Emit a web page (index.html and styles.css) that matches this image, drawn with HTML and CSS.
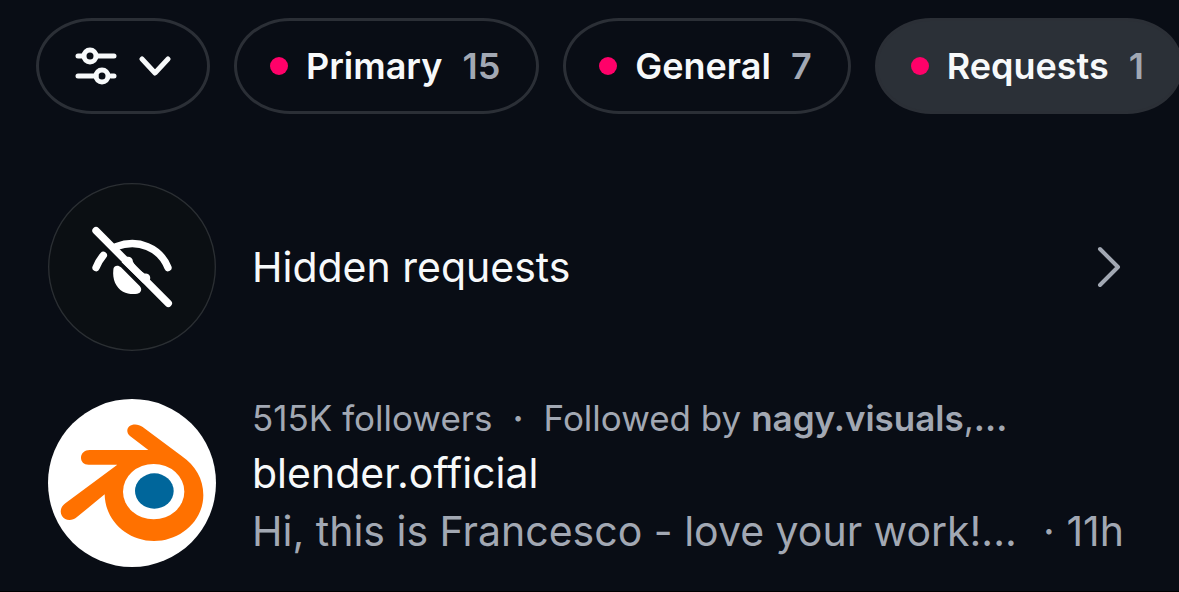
FILE: index.html
```html
<!DOCTYPE html>
<html lang="en">
<head>
    <meta charset="UTF-8">
    <meta name="viewport" content="width=device-width, initial-scale=1.0">
    <title>Requests</title>
    <link rel="stylesheet" href="styles.css">
</head>
<body>
    <nav class="filters">
        <button class="pill pill-filter" aria-label="Filter">
            <svg class="icon-sliders" viewBox="0 0 42 38" aria-hidden="true">
                <path d="M3 9h4M22 9h17M3 29h18M36 29h3"/>
                <circle cx="15" cy="9" r="6"/>
                <circle cx="27" cy="29" r="6"/>
            </svg>
            <svg class="icon-down" viewBox="0 0 32 20" aria-hidden="true">
                <path d="M3 3l13 14L29 3"/>
            </svg>
        </button>
        <button class="pill"><span class="dot"></span>Primary<span class="count">15</span></button>
        <button class="pill"><span class="dot"></span>General<span class="count">7</span></button>
        <button class="pill active"><span class="dot"></span>Requests<span class="count">1</span></button>
    </nav>

    <main class="list">
        <a class="row" href="#hidden">
            <svg class="avatar" viewBox="24 24 504 504" aria-hidden="true">
                <circle class="ring" cx="276" cy="276" r="250"/>
                <path class="pupil" d="M220 284C220 272 234 268 243 277L299 333C308 343 303 354 292 356C278 358 262 357 249 350C227 337 217 312 220 284Z"/>
                <path class="pupil" d="M252 250C264 241 278 246 279 260L290 280L315 296C328 294 335 306 328 320L310 325L245 262Z"/>
                <path class="stroke" d="M168 278Q177 256 190 241M228 215C295 190 360 218 384 278"/>
                <path class="stroke" d="M168 167L385 385"/>
            </svg>
            <span class="title">Hidden requests</span>
            <svg class="icon-next" viewBox="0 0 28 44" aria-hidden="true">
                <path d="M4 4l18 18L4 40"/>
            </svg>
        </a>
        <a class="row" href="#blender">
            <svg class="avatar" viewBox="24 27 504 504" role="img" aria-label="blender.official">
                <circle cx="276" cy="279" r="252" fill="#fff"/>
                <path fill="#ff7100" d="M268 109C278 101 296 102 308 111L425 198C466 226 490 267 490 315C490 394 420 453 342 453C262 453 195 392 194 313L110 382C96 394 75 393 66 378C58 364 63 350 76 340L232 224L146 224C131 224 123 214 123 203C123 190 134 180 149 180L325 180L270 138C259 129 260 116 268 109Z"/>
                <ellipse cx="341" cy="305" rx="92" ry="83" fill="#fff"/>
                <ellipse cx="343" cy="303" rx="58" ry="53" fill="#00669b"/>
            </svg>
            <div class="info">
                <div class="meta">515K followers<b class="sep">·</b>Followed by <b>nagy.visuals</b>,<b>...</b></div>
                <div class="title">blender.official</div>
                <div class="message"><span>Hi, this is Francesco - love your work!...</span><span>· 11h</span></div>
            </div>
        </a>
    </main>
</body>
</html>
```
FILE: styles.css
```css
body {
    margin: 0;
    background-color: #090d15;
    color: #f7f9fa;
    font-family: Inter, "Liberation Sans", sans-serif;
    overflow-x: hidden;
}

.filters {
    display: flex;
    gap: 24px;
    padding: 18px 0 0 36px;
    overflow: hidden;
}

.pill {
    display: flex;
    flex-shrink: 0;
    align-items: center;
    height: 96px;
    padding: 0 36px 0 33px;
    border: 3px solid #2b2f36;
    border-radius: 56px / 48px;
    background: none;
    color: inherit;
    font-family: inherit;
    font-size: 36px;
    font-weight: 600;
    cursor: pointer;
}

.pill.active {
    background-color: #2b3037;
}

.pill-filter {
    gap: 22px;
    padding: 0 36px;
}

.dot {
    width: 18px;
    height: 18px;
    margin-right: 18px;
    border-radius: 50%;
    background-color: #ff0169;
}

.count {
    margin-left: 20px;
    color: #a2a8b3;
}

.icon-sliders {
    width: 42px;
    height: 38px;
}

.icon-down {
    width: 32px;
    height: 20px;
}

.icon-next {
    width: 28px;
    height: 44px;
    margin-left: auto;
    color: #a2a8b3;
}

.icon-sliders,
.icon-down,
.icon-next {
    fill: none;
    stroke: currentColor;
    stroke-width: 5;
    stroke-linecap: round;
    stroke-linejoin: round;
}

.icon-next {
    stroke-width: 4;
}

.list {
    display: flex;
    flex-direction: column;
    gap: 42px;
    padding: 69px 55px 18px 48px;
    border-bottom: 1px solid #000;
}

.row {
    display: flex;
    align-items: center;
    gap: 36px;
    color: inherit;
    text-decoration: none;
}

.avatar {
    flex-shrink: 0;
    width: 168px;
    height: 168px;
}

.ring {
    fill: #0b0f13;
    stroke: #2b2f33;
    stroke-width: 4;
}

.stroke {
    fill: none;
    stroke: #fff;
    stroke-width: 22;
    stroke-linecap: round;
}

.pupil {
    fill: #fff;
}

.info {
    flex: 1;
    min-width: 0;
    padding-bottom: 13px;
    white-space: nowrap;
}

.title,
.message {
    font-size: 41px;
    line-height: 58px;
}

.meta {
    margin-bottom: 1px;
    font-size: 35px;
    line-height: 50px;
}

.meta,
.message {
    color: #a2a8b3;
}

.meta b {
    font-weight: 600;
}

.meta .sep {
    margin: 0 20px;
}

.message {
    display: flex;
    justify-content: space-between;
}
```
